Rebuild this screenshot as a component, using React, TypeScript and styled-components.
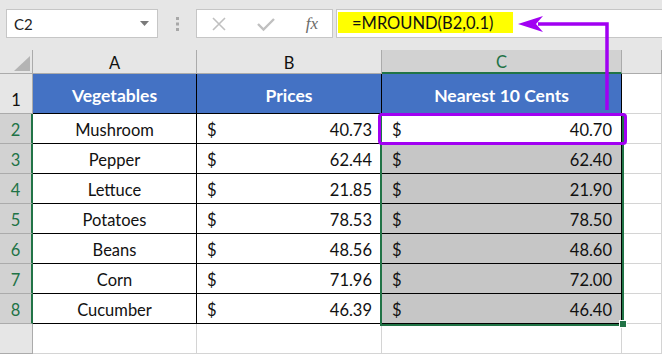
import React from "react";
import styled, { createGlobalStyle, css } from "styled-components";

const GlobalStyle = createGlobalStyle`
    html, body {
        margin: 0;
        padding: 0;
        background: #ffffff;
    }
    * {
        box-sizing: border-box;
    }
`;

const Page = styled.div`
    position: relative;
    width: 662px;
    height: 354px;
    overflow: hidden;
    font-family: Lato, "Noto Sans", sans-serif;
    background: #ffffff;
`;

const Toolbar = styled.div`
    display: flex;
    align-items: flex-start;
    height: 50px;
    padding: 9px 0 0 6px;
    background: #e6e6e6;
`;

const NameBox = styled.div`
    display: flex;
    align-items: center;
    justify-content: space-between;
    width: 152px;
    height: 29px;
    padding: 0 8px 0 7px;
    background: #ffffff;
    border: 1px solid #c6c6c6;
    font-size: 15px;
    color: #222222;
`;

const Grip = styled.div`
    width: 38px;
    height: 29px;
    display: flex;
    align-items: center;
    justify-content: center;
`;

const FxButtons = styled.div`
    display: flex;
    align-items: center;
    justify-content: space-between;
    width: 137px;
    height: 29px;
    padding: 0 14px 0 14px;
    background: #ffffff;
    border: 1px solid #c6c6c6;
`;

const FxLabel = styled.span`
    font-family: "Liberation Serif", serif;
    font-style: italic;
    font-size: 17px;
    color: #6a6a6a;
`;

const FormulaInput = styled.div`
    flex: 1;
    height: 29px;
    margin-left: 3px;
    padding: 2px 0 0 1px;
    background: #ffffff;
    border: 1px solid #c6c6c6;
    border-right: none;
`;

const Highlight = styled.span`
    display: inline-flex;
    align-items: center;
    width: 175px;
    height: 21px;
    padding-left: 14px;
    background: #ffff00;
    font-size: 16.5px;
    color: #111111;
`;

const Sheet = styled.div`
    display: grid;
    grid-template-columns: 33px 164px 185px 240px 1fr;
    grid-template-rows: 24px 40px repeat(7, 30px) 1fr;
    height: 304px;
    font-size: 16.5px;
`;

type Kind =
    | "corner"
    | "colhead"
    | "colheadSel"
    | "rowhead"
    | "rowheadSel"
    | "th"
    | "td"
    | "tdSel"
    | "tdActive"
    | "blank";

const dataCell = css`
    border-right: 1px solid #000000;
    border-bottom: 1px solid #000000;
    justify-content: center;
    padding-top: 3px;
    color: #111111;
`;

const kinds: Record<Kind, ReturnType<typeof css>> = {
    corner: css`
        background: #e6e6e6;
        border-right: 1px solid #ababab;
        border-bottom: 1px solid #ababab;
        align-items: flex-end;
        justify-content: flex-end;
        padding: 0 2px 2px 0;
    `,
    colhead: css`
        background: #e6e6e6;
        border-right: 1px solid #ababab;
        border-bottom: 1px solid #ababab;
        justify-content: center;
        padding-top: 2px;
        color: #111111;
    `,
    colheadSel: css`
        background: #d2d2d2;
        border-right: 1px solid #ababab;
        border-bottom: 2px solid #217346;
        justify-content: center;
        padding-top: 2px;
        color: #217346;
    `,
    rowhead: css`
        background: #e6e6e6;
        border-right: 1px solid #ababab;
        border-bottom: 1px solid #ababab;
        justify-content: center;
        align-items: flex-end;
        padding-bottom: 3px;
        color: #111111;
    `,
    rowheadSel: css`
        background: #d2d2d2;
        border-right: 2px solid #217346;
        border-bottom: 1px solid #ababab;
        justify-content: center;
        align-items: flex-end;
        padding-bottom: 3px;
        color: #217346;
    `,
    th: css`
        background: #4472c4;
        border-right: 1px solid #000000;
        border-bottom: 1px solid #000000;
        justify-content: center;
        padding-top: 3px;
        color: #ffffff;
        font-weight: 700;
        font-size: 17.5px;
    `,
    td: css`
        background: #ffffff;
        ${dataCell}
    `,
    tdSel: css`
        background: #c6c6c6;
        ${dataCell}
    `,
    tdActive: css`
        background: #ffffff;
        ${dataCell}
    `,
    blank: css`
        background: #ffffff;
        border-right: 1px solid #d4d4d4;
        border-bottom: 1px solid #d4d4d4;
    `,
};

const Cell = styled.div<{ $kind: Kind }>`
    display: flex;
    align-items: center;
    overflow: hidden;
    white-space: nowrap;
    ${(p) => kinds[p.$kind]}
`;

const Money = styled.div`
    display: flex;
    justify-content: space-between;
    width: 100%;
    padding: 0 9px 0 10px;
`;

const SelectionFrame = styled.div`
    position: absolute;
    left: 380px;
    top: 113px;
    width: 244px;
    height: 213px;
    border: 2px solid #217346;
    pointer-events: none;
`;

const FillHandle = styled.div`
    position: absolute;
    left: 619px;
    top: 320px;
    width: 8px;
    height: 8px;
    background: #217346;
    border: 1px solid #ffffff;
`;

const Callout = styled.div`
    position: absolute;
    left: 378px;
    top: 113px;
    width: 249px;
    height: 32px;
    border: 3px solid #a100f2;
    border-radius: 4px;
`;

const ArrowLayer = styled.svg`
    position: absolute;
    left: 0;
    top: 0;
    pointer-events: none;
`;

const rows = [
    ["Mushroom", "40.73", "40.70"],
    ["Pepper", "62.44", "62.40"],
    ["Lettuce", "21.85", "21.90"],
    ["Potatoes", "78.53", "78.50"],
    ["Beans", "48.56", "48.60"],
    ["Corn", "71.96", "72.00"],
    ["Cucumber", "46.39", "46.40"],
];

const App: React.FC = () => {
    return (
        <Page>
            <GlobalStyle />
            <Toolbar>
                <NameBox>
                    <span>C2</span>
                    <svg width="9" height="5" viewBox="0 0 9 5">
                        <path d="M0 0 L9 0 L4.5 5 Z" fill="#7a7a7a" />
                    </svg>
                </NameBox>
                <Grip>
                    <svg width="3" height="14" viewBox="0 0 3 14">
                        <rect x="0" y="0" width="3" height="3" fill="#a8a8a8" />
                        <rect x="0" y="5.5" width="3" height="3" fill="#a8a8a8" />
                        <rect x="0" y="11" width="3" height="3" fill="#a8a8a8" />
                    </svg>
                </Grip>
                <FxButtons>
                    <svg width="16" height="16" viewBox="0 0 16 16">
                        <path d="M2 2 L14 14 M14 2 L2 14" stroke="#c0c0c0" strokeWidth="1.6" />
                    </svg>
                    <svg width="18" height="16" viewBox="0 0 18 16">
                        <path d="M1 8 L6.5 13.5 L17 3" stroke="#c0c0c0" strokeWidth="2.4" fill="none" />
                    </svg>
                    <FxLabel>fx</FxLabel>
                </FxButtons>
                <FormulaInput>
                    <Highlight>=MROUND(B2,0.1)</Highlight>
                </FormulaInput>
            </Toolbar>

            <Sheet>
                <Cell $kind="corner">
                    <svg width="16" height="15" viewBox="0 0 16 15">
                        <path d="M16 0 L16 15 L0 15 Z" fill="#b4b4b4" />
                    </svg>
                </Cell>
                <Cell $kind="colhead">A</Cell>
                <Cell $kind="colhead">B</Cell>
                <Cell $kind="colheadSel">C</Cell>
                <Cell $kind="colhead" />

                <Cell $kind="rowhead">1</Cell>
                <Cell $kind="th">Vegetables</Cell>
                <Cell $kind="th">Prices</Cell>
                <Cell $kind="th">Nearest 10 Cents</Cell>
                <Cell $kind="blank" />

                {rows.map(([name, price, rounded], i) => (
                    <React.Fragment key={name}>
                        <Cell $kind="rowheadSel">{i + 2}</Cell>
                        <Cell $kind="td">{name}</Cell>
                        <Cell $kind="td">
                            <Money>
                                <span>$</span>
                                <span>{price}</span>
                            </Money>
                        </Cell>
                        <Cell $kind={i === 0 ? "tdActive" : "tdSel"}>
                            <Money>
                                <span>$</span>
                                <span>{rounded}</span>
                            </Money>
                        </Cell>
                        <Cell $kind="blank" />
                    </React.Fragment>
                ))}

                <Cell $kind="rowhead" />
                <Cell $kind="blank" />
                <Cell $kind="blank" />
                <Cell $kind="blank" />
                <Cell $kind="blank" />
            </Sheet>

            <SelectionFrame />
            <FillHandle />
            <Callout />
            <ArrowLayer width="662" height="354" viewBox="0 0 662 354">
                <path d="M607 110 L607 24 L538 24" stroke="#a100f2" strokeWidth="3.5" fill="none" />
                <path d="M518 24 L543 16 L536 24 L543 32 Z" fill="#a100f2" />
            </ArrowLayer>
        </Page>
    );
};

export default App;
